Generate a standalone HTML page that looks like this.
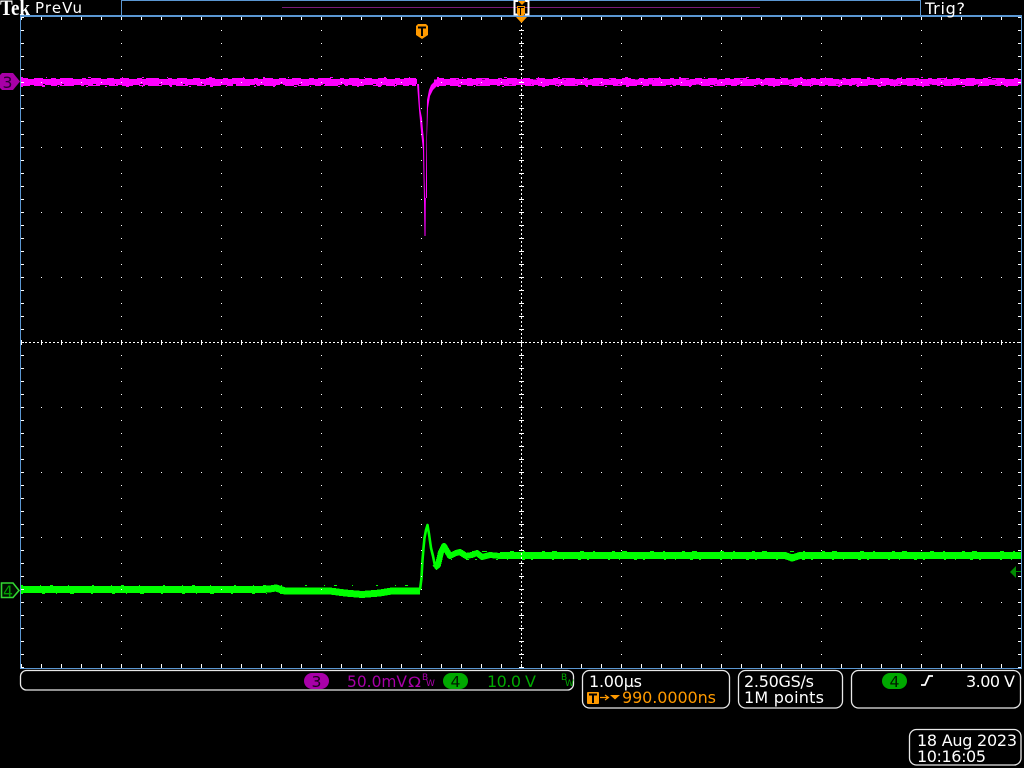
<!DOCTYPE html>
<html>
<head>
<meta charset="utf-8">
<style>
html,body{margin:0;padding:0;background:#000;width:1024px;height:768px;overflow:hidden}
svg{display:block}
text{font-family:"DejaVu Sans","Liberation Sans",sans-serif;font-size:16px;fill:#fff}
</style>
</head>
<body>
<svg width="1024" height="768" viewBox="0 0 1024 768" xmlns="http://www.w3.org/2000/svg">
<defs>
<pattern id="pa" x="21" y="17" width="20" height="65" patternUnits="userSpaceOnUse"><rect x="0" y="0" width="1" height="1" fill="#fff"/></pattern>
<pattern id="pb" x="21" y="17" width="100" height="13" patternUnits="userSpaceOnUse"><rect x="0" y="0" width="1" height="1" fill="#fff"/></pattern>
</defs>
<rect width="1024" height="768" fill="#000"/>

<!-- magenta trace -->
<g fill="none" stroke="#ff00ff" shape-rendering="crispEdges">
<path d="M21 81.5H417M434 82H1021" stroke-width="5"/>
<path d="M21 79.5H416M437 79.5H1021" stroke-width="1" stroke-dasharray="19 2 24 3 15 1 32 4 27 2 21 3"/>
<path d="M21 78.5H416M437 78.5H1021" stroke-width="1" stroke-dasharray="7 6 9 8 5 4 13 9 4 5 10 6"/>
<path d="M21 77.5H416M437 77.5H1021" stroke-width="1" stroke-dasharray="2 23 1 41 3 31 1 19"/>
<path d="M21 84.5H416M437 84.5H1021" stroke-width="1" stroke-dasharray="22 2 17 2 29 3 19 1 24 3 16 2"/>
<path d="M21 85.5H416M437 85.5H1021" stroke-width="1" stroke-dasharray="9 4 11 6 6 3 14 7 3 4 12 9"/>
<path d="M21 86.5H416M437 86.5H1021" stroke-width="1" stroke-dasharray="2 19 3 13 1 27 2 17"/>
</g>
<path d="M417 84H419L420 108L422 118L423 130L424 140L424.5 178L425 198L427 198V137L428 108L430 96L433 90L437 86V79L431 85L429 90L427 100L426.5 137L426 178L425.5 236H424.5L424 200L423 150L421 132L419 110Z" fill="#ff00ff"/>

<!-- green trace -->
<g fill="none" stroke="#00ff00" stroke-linejoin="round">
<path d="M21 589.5H262L270 589L276 588L285 591H330L345 593L362 594.5L380 593L392 591H420" stroke-width="7" shape-rendering="crispEdges"/>
<path d="M420 590L421.5 578L422.5 560L423.5 548L424.5 538L426 530L427.5 525L429 534L431 548L433 556L435 566" stroke-width="2.6"/>
<path d="M434.5 568L438 565L441 552L444 546L447 551L450 556L456 553L460 552L466 556L472 555L477 553L482 557L490 555L500 556H520" stroke-width="6" shape-rendering="crispEdges"/>
<path d="M500 555.5H785L792 558L800 555.5H1021" stroke-width="7" shape-rendering="crispEdges"/>
<path d="M440 551.5H1021" stroke-width="1" stroke-dasharray="4 9 2 17 3 7 5 23" shape-rendering="crispEdges"/>
<path d="M440 559.500H1021" stroke-width="1" stroke-dasharray="2 9 1 14 3 6 2 19" shape-rendering="crispEdges"/>
<path d="M21 585.5H418" stroke-width="1" stroke-dasharray="2 17 1 9 3 15 1 23" shape-rendering="crispEdges"/>
<path d="M21 593.5H418" stroke-width="1" stroke-dasharray="2 19 3 11 1 13 4 17" shape-rendering="crispEdges"/>
</g>

<!-- graticule -->
<rect x="21" y="17" width="1000" height="651" fill="url(#pa)"/>
<rect x="21" y="17" width="1000" height="651" fill="url(#pb)"/>
<g fill="none" stroke="#fff" shape-rendering="crispEdges" stroke-width="1">
<path d="M521.5 17V668" stroke-dasharray="2 2"/>
<path d="M21 342.5H1021" stroke-dasharray="2 2"/>
<path d="M521.5 17V668" stroke-width="5" stroke-dasharray="1 12"/>
<path d="M21 342.5H1021" stroke-width="5" stroke-dasharray="1 19"/>
<path d="M21 18.5H1021" stroke-width="3" stroke-dasharray="1 19"/>
<path d="M21 665.5H1021" stroke-width="3" stroke-dasharray="1 19"/>
<path d="M22.5 17V668" stroke-width="3" stroke-dasharray="1 12"/>
<path d="M1019.5 17V668" stroke-width="3" stroke-dasharray="1 12"/>
</g>

<!-- frame -->
<g fill="none" stroke="#5b97d2" stroke-width="1" shape-rendering="crispEdges">
<path d="M20.5 16.5H1021.5V668.5H20.5Z" stroke-width="1"/>
<path d="M121.5 16V0.5H920.5V16"/>
</g>
<rect x="20" y="15" width="1002" height="2" fill="#5b97d2"/>
<rect x="282" y="7" width="478" height="1" fill="#7a1a78"/>

<!-- header text -->
<text x="0" y="15" textLength="30" lengthAdjust="spacingAndGlyphs" style="font-family:'Liberation Serif',serif;font-weight:bold;font-size:22px">Tek</text>
<text x="35" y="13" textLength="47" lengthAdjust="spacing" style="font-size:15px">PreVu</text>
<text x="925" y="14" textLength="40" lengthAdjust="spacing" style="font-size:16px">Trig?</text>

<!-- trigger position marker -->
<path d="M518 1H514.5V14.5H518M525 1H528.5V14.5H525" fill="none" stroke="#fff" stroke-width="1.6" shape-rendering="crispEdges"/>
<path d="M518 1H526L522 5Z" fill="#ff9a00"/>
<path d="M517 6H525V14L523 16H519L517 14Z" fill="#ff9a00"/>
<path d="M518 7.5H524M520.5 7.5V15" stroke="#000" stroke-width="1.2" fill="none" shape-rendering="crispEdges"/>
<path d="M516 17H527L521.5 23Z" fill="#ff9a00"/>

<path d="M416 26L418 24H426L428 26V35L422 39L416 35Z" fill="#ff9a00"/>
<path d="M418 27.5H426M422 27.5V36" stroke="#000" stroke-width="1.6" fill="none" shape-rendering="crispEdges"/>

<!-- channel markers -->
<path d="M2 73H13L20 81.5L13 90H2L0 88V75Z" fill="#a800a8"/>
<text x="2.500" y="88" textLength="10" lengthAdjust="spacingAndGlyphs" style="font-size:16px;fill:#2a0030">3</text>
<path d="M1.5 583H13L19 590.5L13 597.500H1.5Z" fill="#001000" stroke="#33d633" stroke-width="1.6"/>
<text x="3" y="597" textLength="10" lengthAdjust="spacingAndGlyphs" style="font-size:16px;fill:#00a000">4</text>

<!-- trigger level marker -->
<path d="M1010 572L1016 566V578Z" fill="#008a00"/>
<rect x="1016" y="571" width="5" height="1" fill="#008a00"/>

<!-- readout boxes -->
<g fill="none" stroke="#e8e8e8" stroke-width="1.3">
<rect x="20.500" y="670.500" width="553" height="19.500" rx="6"/>
<rect x="582.500" y="670.500" width="147" height="37.500" rx="7"/>
<rect x="738.500" y="670.500" width="104" height="37.500" rx="7"/>
<rect x="851.500" y="670.500" width="169" height="37.500" rx="7"/>
<rect x="909.500" y="729.500" width="111.500" height="35.500" rx="7"/>
</g>

<!-- channel readout -->
<rect x="304" y="673" width="25" height="16" rx="8" fill="#a800a8"/>
<text x="311.500" y="687" textLength="10" lengthAdjust="spacingAndGlyphs" style="font-size:15px;fill:#1a001a">3</text>
<text x="347" y="687" textLength="60" lengthAdjust="spacingAndGlyphs" style="fill:#a800a8">50.0mV</text>
<text x="408" y="687" textLength="13" lengthAdjust="spacingAndGlyphs" style="fill:#a800a8;font-size:14px">Ω</text>
<text x="422" y="680" style="fill:#a800a8;font-size:9px">B</text>
<text x="426" y="686" style="fill:#a800a8;font-size:9px">W</text>
<rect x="443" y="673" width="25" height="16" rx="8" fill="#00a800"/>
<text x="450.500" y="687" textLength="10" lengthAdjust="spacingAndGlyphs" style="font-size:15px;fill:#001a00">4</text>
<text x="487" y="687" textLength="49" lengthAdjust="spacing" style="fill:#00a800">10.0 V</text>
<text x="561" y="680" style="fill:#00a800;font-size:9px">B</text>
<text x="565" y="686" style="fill:#00a800;font-size:9px">W</text>

<!-- horizontal readout -->
<text x="589" y="687" textLength="53" lengthAdjust="spacing">1.00µs</text>
<rect x="587" y="692" width="12" height="12" rx="1" fill="#ff9a00"/>
<path d="M589 694.500H597M593 694.500V703" stroke="#000" stroke-width="1.6" fill="none" shape-rendering="crispEdges"/>
<path d="M600 697.500H608M605 695L608.500 697.500L605 700" stroke="#ff9a00" stroke-width="1.2" fill="none"/>
<path d="M610 695H620L615 699.500Z" fill="#ff9a00"/>
<text x="622" y="703" textLength="94" lengthAdjust="spacing" style="fill:#ff9a00">990.0000ns</text>

<!-- sample readout -->
<text x="744" y="687" textLength="70" lengthAdjust="spacing">2.50GS/s</text>
<text x="744" y="703" textLength="80" lengthAdjust="spacing">1M points</text>

<!-- trigger readout -->
<rect x="882" y="673" width="25" height="16" rx="8" fill="#00a800"/>
<text x="889.500" y="687" textLength="10" lengthAdjust="spacingAndGlyphs" style="font-size:15px;fill:#001a00">4</text>
<path d="M921 685H925L929 676H933" fill="none" stroke="#fff" stroke-width="1.800"/>
<text x="966" y="687" textLength="49" lengthAdjust="spacing">3.00 V</text>

<!-- date -->
<text x="917" y="746" textLength="100" lengthAdjust="spacing">18 Aug 2023</text>
<text x="917" y="762" textLength="69" lengthAdjust="spacing">10:16:05</text>
</svg>
</body>
</html>
